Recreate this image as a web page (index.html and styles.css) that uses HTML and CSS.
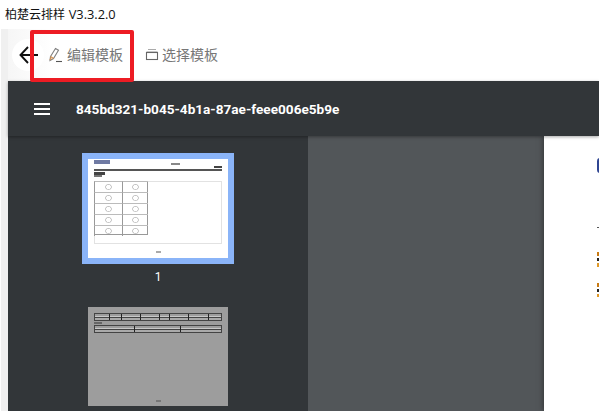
FILE: index.html
```html
<!DOCTYPE html>
<html lang="en">
<head>
    <meta charset="UTF-8">
    <title>柏楚云排样</title>
    <link rel="stylesheet" href="styles.css">
</head>
<body>
    <div class="titlebar">柏楚云排样 <span class="version">V3.3.2.0</span></div>

    <div class="app">
        <div class="toolbar">
            <div class="back-button">
                <svg width="20" height="18" viewBox="0 0 20 18"><path d="M9 1 L1.5 9 L9 17 M1.5 9 H19" fill="none" stroke="#111" stroke-width="1.9"/></svg>
            </div>
            <div class="tool">
                <svg width="14" height="16" viewBox="0 0 14 16"><path d="M1.5 9.5 L6.5 1.5 L9.5 3.3 L4.5 11.5 L1 13.5 Z" fill="none" stroke="#7f7f7f" stroke-width="1.1"/><path d="M1.5 9.5 L4.5 11.5" stroke="#d9914a" stroke-width="1.2"/><path d="M1 13 L2 11" stroke="#d9914a" stroke-width="1.2"/><path d="M7 14.5 H13" stroke="#555" stroke-width="1.1"/></svg>
                <span>编辑模板</span>
            </div>
            <div class="tool">
                <svg width="14" height="14" viewBox="0 0 14 14"><path d="M3 1.5 H11" stroke="#aaa" stroke-width="1"/><path d="M1.5 4 H12.5" stroke="#999" stroke-width="1"/><rect x="1.5" y="4.5" width="11" height="7" fill="none" stroke="#666" stroke-width="1.1"/></svg>
                <span>选择模板</span>
            </div>
        </div>

        <div class="viewer">
            <div class="viewer-bar">
                <div class="menu-icon"><i></i><i></i><i></i></div>
                <div class="doc-name">845bd321-b045-4b1a-87ae-feee006e5b9e</div>
            </div>
            <div class="viewer-body">
                <div class="sidebar">
                    <div class="thumb selected">
                        <div class="sheet">
                            <div class="sheet-head">
                                <b class="logo-mark"></b>
                                <b class="head-title"></b>
                                <b class="head-right"></b>
                            </div>
                            <div class="sheet-rule"></div>
                            <b class="label-a"></b>
                            <b class="label-b"></b>
                            <div class="sheet-frame">
                                <div class="grid">
                                    <span>○</span><span>○</span>
                                    <span>○</span><span>○</span>
                                    <span>○</span><span>○</span>
                                    <span>○</span><span>○</span>
                                    <span>○</span><span>○</span>
                                </div>
                            </div>
                            <b class="page-mark"></b>
                        </div>
                    </div>
                    <div class="thumb-number">1</div>

                    <div class="thumb-two">
                        <div class="table-a"><i></i><i></i><i></i><i></i><i></i><i></i><i></i><i></i></div>
                        <b class="label-c"></b>
                        <div class="table-b"><i></i><i></i><i></i></div>
                        <b class="page-mark-two"></b>
                    </div>
                </div>
                <div class="main">
                    <div class="page">
                        <div class="page-logo"></div>
                        <div class="page-dash"></div>
                        <div class="page-mark-line"></div>
                        <div class="page-mark-line second"></div>
                    </div>
                </div>
            </div>
        </div>
    </div>

    <div class="highlight"></div>
</body>
</html>
```

FILE: styles.css
```css
* {
    margin: 0;
    padding: 0;
    box-sizing: border-box;
}

html, body {
    height: 411px;
    overflow: hidden;
}

body {
    position: relative;
    width: 599px;
    background: #fff;
    font-family: "Noto Sans CJK SC", "Liberation Sans", sans-serif;
}

.titlebar {
    height: 29px;
    padding: 5px 0 0 5px;
    font-size: 12px;
    line-height: 17px;
    color: #111;
}

.version {
    margin-left: 1px;
    font-family: "Open Sans", "Liberation Sans", sans-serif;
    font-size: 12.8px;
}

.app {
    height: 382px;
    margin-left: 1px;
    padding-left: 7px;
    background: #f0f0f0;
    display: flex;
    flex-direction: column;
}

.toolbar {
    height: 52px;
    margin-left: -7px;
    padding-left: 11px;
    background: linear-gradient(to right, #f0f0f0 7px, #f6f6f6 7px, #fff 52px);
    display: flex;
    align-items: center;
}

.back-button {
    width: 32px;
    height: 32px;
    border-radius: 50%;
    background: #fff;
    display: flex;
    align-items: center;
    justify-content: center;
    padding-left: 2px;
}

.tool {
    display: flex;
    align-items: center;
    gap: 4px;
    margin-left: 5px;
    font-size: 14px;
    color: #777;
}

.tool span {
    padding-bottom: 2px;
}

.tool + .tool {
    margin-left: 22px;
    gap: 3px;
}

.viewer {
    flex: 1;
    display: flex;
    flex-direction: column;
    min-height: 0;
}

.viewer-bar {
    height: 55px;
    background: #323639;
    display: flex;
    align-items: center;
    color: #fff;
    padding-left: 26px;
    position: relative;
    box-shadow: 0 1px 3px rgba(0, 0, 0, 0.35);
}

.menu-icon {
    width: 16px;
    display: flex;
    flex-direction: column;
    gap: 3px;
}

.menu-icon i {
    display: block;
    height: 2px;
    background: #fff;
}

.doc-name {
    margin-left: 26px;
    font-family: Roboto, "Liberation Sans", sans-serif;
    font-size: 13.6px;
    font-weight: 700;
}

.viewer-body {
    flex: 1;
    display: flex;
    min-height: 0;
}

.sidebar {
    width: 300px;
    background: #323639;
    padding-top: 17px;
    padding-left: 74px;
    overflow: hidden;
}

.thumb {
    width: 152px;
    height: 111px;
    background: #8ab4f8;
    padding: 6px;
}

.sheet {
    height: 99px;
    background: #fff;
    padding: 1px 6px 0;
}

.sheet > * {
    filter: blur(0.5px);
}

.sheet b {
    display: block;
    background: #888;
}

.sheet-head {
    display: flex;
    justify-content: space-between;
    align-items: flex-start;
    height: 9px;
}

.sheet .logo-mark {
    width: 16px;
    height: 4px;
    background: #6f7aa3;
}

.sheet .head-title {
    width: 9px;
    height: 2px;
    margin-top: 3px;
    margin-left: 27px;
}

.sheet .head-right {
    width: 8px;
    height: 2px;
    margin-top: 6px;
    background: #444;
}

.sheet-rule {
    height: 2px;
    background: #555;
}

.sheet .label-a {
    width: 11px;
    height: 3px;
    margin-top: 1px;
    background: #444;
}

.sheet .label-b {
    width: 8px;
    height: 2px;
    background: #777;
}

.sheet-frame {
    height: 63px;
    margin-top: 4px;
    border: 1px solid #e2e2e2;
}

.grid {
    width: 54px;
    height: 54px;
    margin: -1px 0 0 -1px;
    display: grid;
    grid-template-columns: 28px 26px;
    grid-template-rows: repeat(5, 1fr);
    border-right: 1px solid #999;
    border-bottom: 1px solid #999;
}

.grid span {
    border-left: 1px solid #999;
    border-top: 1px solid #bbb;
    font-size: 8px;
    line-height: 10px;
    color: #888;
    text-align: center;
    font-family: "DejaVu Sans", sans-serif;
}

.sheet .page-mark {
    width: 5px;
    height: 2px;
    margin: 7px auto 0;
    background: #aaa;
}

.thumb-number {
    width: 152px;
    height: 43px;
    padding-top: 5px;
    text-align: center;
    color: #fff;
    font-family: Roboto, "Liberation Sans", sans-serif;
    font-size: 12px;
    line-height: 16px;
}

.thumb-two {
    width: 140px;
    height: 99px;
    margin-left: 6px;
    background: #9d9d9d;
    padding: 6px 6px 0;
    position: relative;
}

.thumb-two > * {
    filter: blur(0.5px);
}

.table-a, .table-b {
    display: grid;
    height: 8px;
    border: 1px solid #444;
    background: linear-gradient(#9d9d9d 2px, #c8c8c8 2px, #c8c8c8 3px, #444 3px, #444 4px, #aaa 4px);
}

.table-a {
    grid-template-columns: 15fr 12fr 19fr 20fr 10fr 19fr 20fr 12fr;
}

.table-b {
    grid-template-columns: 40fr 47fr 40fr;
    margin-top: 1px;
}

.table-a i, .table-b i {
    border-right: 1px solid #222;
}

.table-a i:last-child, .table-b i:last-child {
    border-right: none;
}

.label-c {
    display: block;
    width: 8px;
    height: 2px;
    margin-top: 1px;
    background: #666;
}

.page-mark-two {
    position: absolute;
    left: 68px;
    bottom: 4px;
    width: 5px;
    height: 2px;
    background: #777;
}

.main {
    flex: 1;
    background: #525659;
    padding-left: 236px;
    min-width: 0;
}

.page {
    height: 100%;
    background: #fff;
    box-shadow: 0 0 6px rgba(0, 0, 0, 0.5);
    padding-top: 22px;
    padding-left: 53px;
    overflow: hidden;
}

.page-logo {
    width: 8px;
    height: 15px;
    background: #2f4592;
    border-radius: 3px 0 0 3px;
}

.page-dash {
    width: 3px;
    height: 1px;
    margin-top: 54px;
    background: #555;
}

.page-mark-line {
    width: 2px;
    height: 15px;
    margin-top: 24px;
    background: linear-gradient(#c97b14 4px, #fff 4px, #fff 6px, #222 6px, #222 9px, #fff 9px, #fff 11px, #e09a2a 11px);
}

.page-mark-line.second {
    height: 14px;
    margin-top: 16px;
}

.highlight {
    position: absolute;
    left: 30px;
    top: 30px;
    width: 104px;
    height: 52px;
    border: 4px solid #ed1c24;
    border-radius: 2px;
}
```
